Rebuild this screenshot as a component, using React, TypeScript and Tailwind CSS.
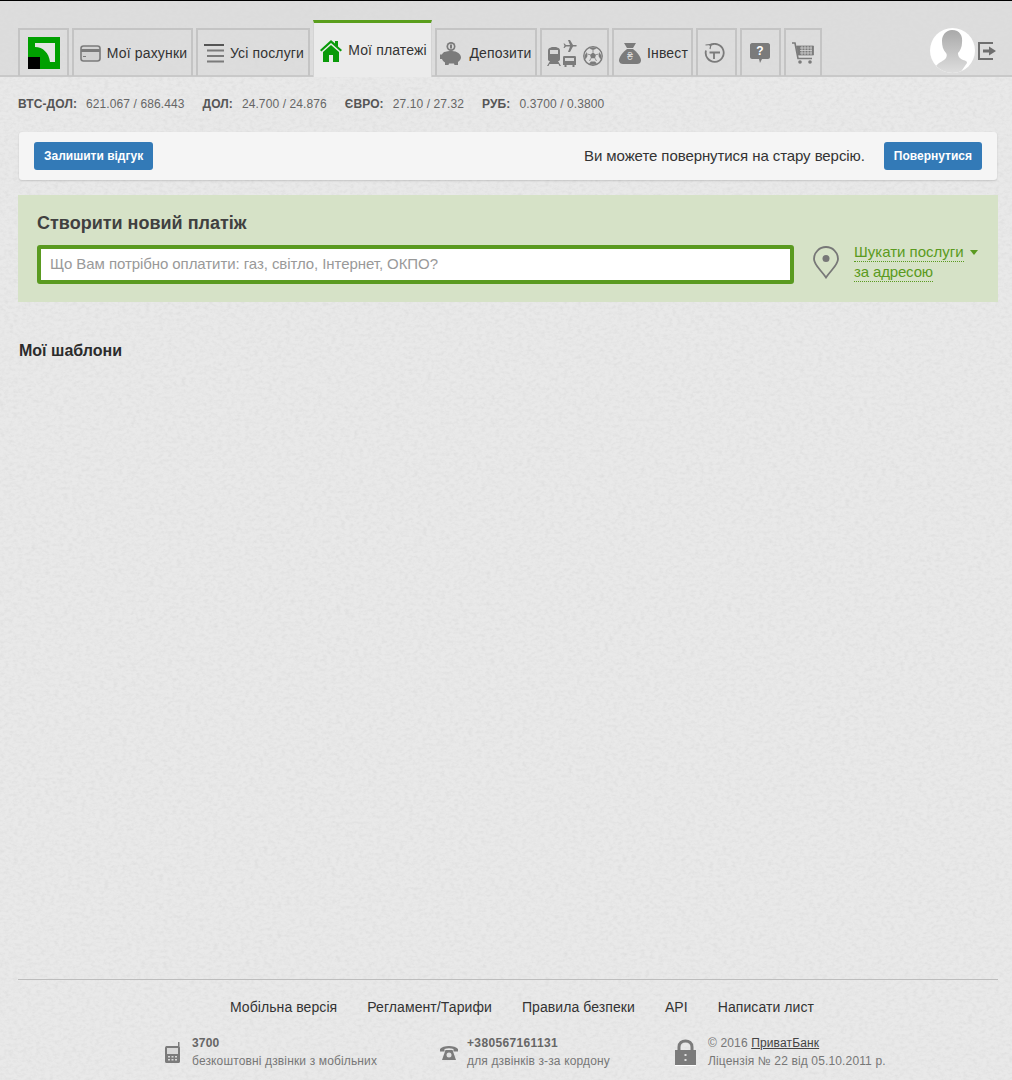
import React from 'react';

const GRAY = '#7b7b7b';

const Logo = () => (
  <svg width="32" height="32" viewBox="0 0 32 32">
    <rect width="32" height="32" fill="#00a000" />
    <path d="M7 6H27V25H22C21 16 15 10 7 10Z" fill="#e4e4e4" />
    <rect y="20" width="12" height="12" fill="#000" />
  </svg>
);

const CardIcon = () => (
  <svg width="21" height="17" viewBox="0 0 21 17">
    <rect x="1" y="1" width="19" height="15" rx="2.5" fill="#d2d2d2" stroke={GRAY} strokeWidth="1.6" />
    <rect x="1" y="4" width="19" height="3" fill={GRAY} />
    <rect x="3" y="11" width="3" height="1" fill={GRAY} />
  </svg>
);

const ListIcon = () => (
  <svg width="20" height="19" viewBox="0 0 20 19" fill={GRAY}>
    <rect width="20" height="2" fill="#555" />
    <rect x="3" y="5.500" width="17" height="2" />
    <rect x="3" y="11" width="17" height="2" />
    <rect x="3" y="16.500" width="17" height="2" />
  </svg>
);

const HomeIcon = () => (
  <svg width="22" height="23" viewBox="0 0 22 23" fill="#0a9a0a">
    <path d="M11 1 15 4.6V2H18V7.4L22 11 20.6 12.6 11 4 1.400 12.600 0 11Z" />
    <path d="M11 6 19 13V23H13V16H9V23H3V13Z" />
  </svg>
);

const PiggyIcon = () => (
  <svg width="21" height="23" viewBox="0 0 21 23" fill={GRAY}>
    <circle cx="11" cy="4.500" r="4.500" />
    <circle cx="11" cy="4.500" r="2.800" fill="#d8d8d8" />
    <rect x="10" y="2.500" width="2" height="4" />
    <path d="M4 10C6 9.500 9 9 12 9 17 9 21 12 21 15.500 21 17.500 19 19 18 20V23H14.500L14 21.500H9L8.500 23H5V20.500C3.500 19.500 2.500 18.500 2 17H0V12.500H2C2.500 11.500 3 11 4 10Z" />
  </svg>
);

const TravelIcon = () => (
  <svg width="56" height="27" viewBox="0 0 56 27" fill={GRAY}>
    <path d="M4 7.500C4 7 5.500 7 7 7 8.500 7 10 7 10 7.500 12.500 8 13 9 13 11V19C13 20.500 12.500 21 11 21L14 26H12.500L11.500 24H2.500L1.500 26H0L3 21C1.500 21 1 20.500 1 19V11C1 9 1.500 8 4 7.500Z" />
    <rect x="3" y="10" width="8" height="4" fill="#d8d8d8" />
    <path d="M21 0H23L26 5H29C30 5 30 6.500 29 6.500H26L23 12H21L23 6.500H19L17.500 8H16.500L17.500 5.700 16.500 3.500H17.500L19 5H23Z" />
    <path d="M17 16H28C29 16 29 17 29 18V25H27.500V27H25.500V25H19.500V27H17.500V25H16V18C16 17 16 16 17 16Z" />
    <rect x="18" y="18" width="9" height="3" fill="#d8d8d8" />
    <circle cx="46" cy="16" r="9.200" fill="#dedede" stroke={GRAY} strokeWidth="1.400" />
    <path d="M46 12.500 49 14.700 48 18.200H44L43 14.700Z" />
    <path d="M42 8.500 46 7.500 50 8.500 46 10ZM52.500 12 54.500 16 53.500 19.500 51.500 16ZM39.500 12 37.500 16 38.500 19.500 40.500 16ZM42 23.500 46 24.800 50 23.500 48 21.500H44Z" />
    <path d="M46 10V12.500M49 14.700 51.800 14M48 18.200 49.500 21M44 18.200 42.500 21M43 14.700 40.200 14" stroke={GRAY} strokeWidth="0.800" />
  </svg>
);

const BagIcon = () => (
  <svg width="22" height="21" viewBox="0 0 22 21" fill={GRAY}>
    <path d="M5 0H17L14 5H8Z" />
    <path d="M8 6H14C18 9 22 14 22 17.500 22 20 20 21 18 21H4C2 21 0 20 0 17.500 0 14 4 9 8 6Z" />
    <text x="11" y="17" textAnchor="middle" fontSize="10" fill="#d8d8d8" fontFamily="Liberation Sans, sans-serif">₴</text>
  </svg>
);

const ClockIcon = () => (
  <svg width="21" height="21" viewBox="0 0 21 21" fill="none" stroke={GRAY} strokeWidth="1.800">
    <path d="M5.500 2.500A9 9 0 1 1 2 7.500" />
    <path d="M1.500 2 7 1.500 6 6" strokeWidth="1.200" />
    <path d="M5.500 9.500H16M10 9.500V16" />
  </svg>
);

const QuestionIcon = () => (
  <svg width="20" height="20" viewBox="0 0 20 20">
    <path d="M2 0H18C19 0 20 1 20 2V14C20 15 19 16 18 16H12L10 20 9 16H2C1 16 0 15 0 14V2C0 1 1 0 2 0Z" fill={GRAY} />
    <text x="10" y="12" textAnchor="middle" fontSize="12" fontWeight="700" fill="#fff" fontFamily="Liberation Sans, sans-serif">?</text>
  </svg>
);

const CartIcon = () => (
  <svg width="22" height="22" viewBox="0 0 22 22" fill="none" stroke={GRAY}>
    <path d="M0 1H3L6 16.500H20" strokeWidth="1.600" />
    <path d="M4.500 4H21.500V13H6Z" fill={GRAY} strokeWidth="0.800" />
    <path d="M8 6H20M8 8.500H20M8 11H20M10 4V13M13 4V13M16 4V13M19 4V13" stroke="#d4d4d4" strokeWidth="0.800" />
    <circle cx="8" cy="20" r="1.800" fill={GRAY} stroke="none" />
    <circle cx="18" cy="20" r="1.800" fill={GRAY} stroke="none" />
  </svg>
);

const Avatar = () => (
  <svg width="45" height="45" viewBox="0 0 45 45">
    <defs>
      <linearGradient id="face" x1="0" y1="0" x2="0" y2="1">
        <stop offset="0" stopColor="#a9a9a9" />
        <stop offset="1" stopColor="#dedede" />
      </linearGradient>
      <clipPath id="round"><circle cx="22.500" cy="22.500" r="22.500" /></clipPath>
    </defs>
    <circle cx="22.500" cy="22.500" r="22.500" fill="#fff" />
    <path
      clipPath="url(#round)"
      d="M22 2C30 2 33 8 32 15 32 19 30 23 28 25 28 28 29 30 33 32 36 33 37 33 37 35L30 45H14L6 38C9 34 14 33 16 30 17 28 17 26 16 25 13 22 12 18 12 13 12 7 16 2 22 2Z"
      fill="url(#face)"
    />
  </svg>
);

const ExitIcon = () => (
  <svg width="19" height="18" viewBox="0 0 19 18" fill="none" stroke="#6f6f6f" strokeWidth="2">
    <path d="M15 1H1V17H15" />
    <path d="M5 7.500H11V4.500L18 9 11 13.500V10.500H5Z" fill="#6f6f6f" stroke="none" />
  </svg>
);

const PinIcon = () => (
  <svg width="26" height="33" viewBox="0 0 26 33" fill="none">
    <path d="M13 31.500C8 24 1 19 1 13A12 12 0 0 1 25 13C25 19 18 24 13 31.500Z" stroke="#777" strokeWidth="1.800" />
    <circle cx="13" cy="12.500" r="3.500" fill="#777" />
  </svg>
);

const PhoneIcon = () => (
  <svg width="15" height="21" viewBox="0 0 15 21" fill={GRAY}>
    <rect x="13" y="0" width="1.500" height="6" />
    <path d="M1.500 4H13C14 4 15 5 15 6V19.500C15 20.500 14 21 13 21H2C1 21 0 20.500 0 19.500V6C0 5 .5 4 1.500 4Z" />
    <rect x="2" y="6" width="11" height="6" fill="#d8d8d8" />
    <path d="M3 14H5V15.500H3ZM6.500 14H8.500V15.500H6.500ZM10 14H12V15.500H10ZM3 17H5V18.500H3ZM6.500 17H8.500V18.500H6.500ZM10 17H12V18.500H10Z" fill="#d8d8d8" />
  </svg>
);

const LandlineIcon = () => (
  <svg width="18" height="15" viewBox="0 0 18 15" fill={GRAY}>
    <path d="M0 4C3 0 15 0 18 4V6.500H13.500V4C11 3 7 3 4.500 4V6.500H0Z" />
    <path d="M5.500 5H12.500L16 15H2Z" />
    <circle cx="9" cy="10" r="2.500" fill="#e0e0e0" />
  </svg>
);

const LockIcon = () => (
  <svg width="21" height="27" viewBox="0 0 21 27">
    <path d="M4 12V8C4 4 7 2 10.500 2 14 2 17 4 17 8V12" fill="none" stroke={GRAY} strokeWidth="3" />
    <rect y="11" width="21" height="15" fill={GRAY} />
    <rect y="26" width="21" height="1" fill="#fff" />
    <rect x="9.500" y="15" width="2" height="2" fill="#e0e0e0" />
    <rect x="9.500" y="20" width="2" height="2" fill="#e0e0e0" />
  </svg>
);

const Texture = () => (
  <svg className="absolute inset-0 w-full h-full pointer-events-none" aria-hidden="true">
    <filter id="paper">
      <feTurbulence type="fractalNoise" baseFrequency="0.22 0.32" numOctaves="4" seed="4" />
      <feColorMatrix values="0 0 0 0 0.4  0 0 0 0 0.4  0 0 0 0 0.4  0.5 0.5 0 0 -0.42" />
    </filter>
    <rect width="100%" height="100%" filter="url(#paper)" opacity="0.4" />
  </svg>
);

const Tab: React.FC<{ className: string; children: React.ReactNode }> = ({ className, children }) => (
  <a className={`h-[48px] flex items-center justify-center gap-[6px] border-2 border-b-0 border-[#c4c4c4] text-[14px] tracking-[0.15px] text-[#333] ${className}`}>
    {children}
  </a>
);

const rates = [
  { label: 'ВТС-ДОЛ:', value: '621.067 / 686.443' },
  { label: 'ДОЛ:', value: '24.700 / 24.876' },
  { label: 'ЄВРО:', value: '27.10 / 27.32' },
  { label: 'РУБ:', value: '0.3700 / 0.3800' },
];

export default function App() {
  return (
    <div className="relative h-[1080px] overflow-hidden flex flex-col bg-[#e9e9e9] font-['Liberation_Sans',Arial,sans-serif]">
      <Texture />

      <header className="relative h-[77px] shrink-0 border-t border-black border-b-2 border-b-[#c9c9c9] bg-[#d9d9d9]/80 flex items-end pl-[18px] pr-[15px]">
        <nav className="flex items-end gap-[3px] -mb-[1px]">
          <Tab className="w-[51px]"><Logo /></Tab>
          <Tab className="w-[121px] pl-[2px]"><CardIcon />Мої рахунки</Tab>
          <Tab className="w-[114px] pl-[2px]"><ListIcon />Усі послуги</Tab>
          <a className="w-[119px] h-[57px] -mb-[1px] pl-[2px] flex items-center justify-center gap-[6px] border-t-[3px] border-t-[#5a9e1c] border-x border-x-[#d4d4d4] bg-[#ebebeb] text-[14px] tracking-[0.15px] text-[#333]">
            <HomeIcon />Мої платежі
          </a>
          <Tab className="w-[102px] gap-[8px]"><PiggyIcon />Депозити</Tab>
          <Tab className="w-[69px]"><TravelIcon /></Tab>
          <Tab className="w-[81px] pl-[2px]"><BagIcon />Інвест</Tab>
          <Tab className="w-[41px] pr-[5px]"><ClockIcon /></Tab>
          <Tab className="w-[41px] pr-[2px]"><QuestionIcon /></Tab>
          <Tab className="w-[38px]"><CartIcon /></Tab>
        </nav>
        <div className="ml-auto flex items-center gap-[3px] mb-[2px]">
          <Avatar />
          <ExitIcon />
        </div>
      </header>

      <div className="relative h-[55px] shrink-0 flex items-center pl-[18px] pb-[2px] text-[12px] tracking-[0.1px] text-[#666]">
        {rates.map((rate) => (
          <span key={rate.label} className="flex mr-[18px]">
            <b className="mr-[9px] text-[#555]">{rate.label}</b>
            {rate.value}
          </span>
        ))}
      </div>

      <div className="relative h-[48px] shrink-0 ml-[19px] mr-[15px] px-[15px] flex items-center justify-between bg-[#f5f5f5] rounded-[3px] shadow-[0_1px_2px_rgba(0,0,0,0.15)]">
        <button className="h-[28px] px-[10px] rounded-[3px] bg-[#337ab7] text-white text-[12px] font-bold">Залишити відгук</button>
        <div className="flex items-center gap-[19px]">
          <span className="text-[15px] tracking-[-0.08px] text-[#333]">Ви можете повернутися на стару версію.</span>
          <button className="h-[28px] px-[10px] rounded-[3px] bg-[#337ab7] text-white text-[12px] font-bold">Повернутися</button>
        </div>
      </div>

      <section className="relative h-[107px] shrink-0 mt-[15px] ml-[18px] mr-[14px] pl-[19px] pt-[16px] bg-[#d6e2c7]">
        <h2 className="text-[18px] leading-[24px] font-bold text-[#404040]">Створити новий платіж</h2>
        <div className="flex items-start mt-[10px]">
          <input
            className="w-[757px] h-[39px] px-[9px] pb-[2px] border-4 border-[#5a9a20] rounded-[3px] bg-white text-[15px] tracking-[-0.07px] outline-none placeholder:text-[#999]"
            placeholder="Що Вам потрібно оплатити: газ, світло, Інтернет, ОКПО?"
          />
          <div className="ml-[19px] mt-[1px]"><PinIcon /></div>
          <div className="ml-[15px] -mt-[2px] text-[15px] leading-[18px] text-[#5a9a20] flex flex-col items-start gap-[1px]">
            <div className="flex items-center gap-[6px]">
              <span className="border-b border-dotted border-[#5a9a20]">Шукати послуги</span>
              <svg width="8" height="5" viewBox="0 0 8 5" fill="#5a9a20"><path d="M0 0H8L4 5Z" /></svg>
            </div>
            <span className="border-b border-dotted border-[#5a9a20] tracking-[-0.15px]">за адресою</span>
          </div>
        </div>
      </section>

      <h3 className="relative mt-[39px] ml-[19px] text-[16px] leading-[20px] font-bold text-[#2b2b2b]">Мої шаблони</h3>

      <footer className="relative mt-auto h-[101px] shrink-0 mx-[18px] mr-[14px] border-t border-[#bdbdbd] text-[#777]">
        <nav className="flex justify-center gap-[30px] pl-[28px] pt-[19px] text-[14px] leading-[17px] tracking-[0.08px] text-[#333]">
          <a>Мобільна версія</a>
          <a>Регламент/Тарифи</a>
          <a>Правила безпеки</a>
          <a>API</a>
          <a>Написати лист</a>
        </nav>
        <div className="flex mt-[18px] pl-[147px] text-[12px] leading-[18px] tracking-[0.14px]">
          <div className="w-[275px] flex items-center gap-[12px]">
            <PhoneIcon />
            <div><b className="text-[#666]">3700</b><br />безкоштовні дзвінки з мобільних</div>
          </div>
          <div className="w-[235px] flex items-center gap-[9px]">
            <LandlineIcon />
            <div><b className="text-[#666] tracking-[0.35px]">+380567161131</b><br />для дзвінків з-за кордону</div>
          </div>
          <div className="flex items-center gap-[12px]">
            <LockIcon />
            <div>© 2016 <a className="underline text-[#444]">ПриватБанк</a><br />Ліцензія № 22 від 05.10.2011 р.</div>
          </div>
        </div>
      </footer>
    </div>
  );
}
